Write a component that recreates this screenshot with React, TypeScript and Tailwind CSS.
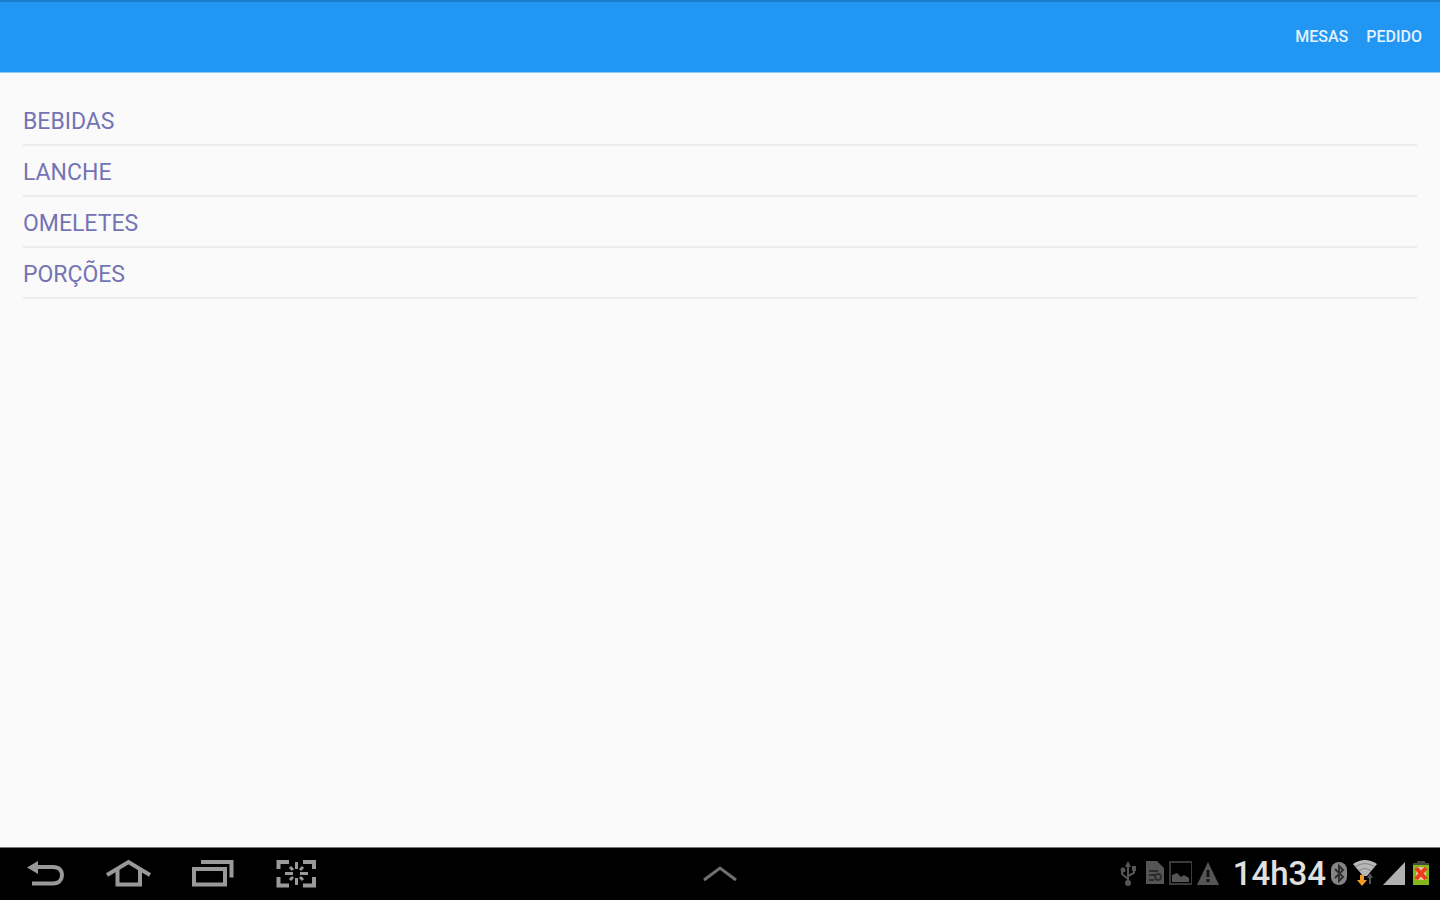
import React from "react";

const categories = ["BEBIDAS", "LANCHE", "OMELETES", "PORÇÕES"];

const BackIcon = () => (
  <svg className="h-8 w-12" viewBox="0 0 48 32" fill="none" stroke="currentColor">
    <path d="M14 9H32C38 9 41 12.5 41 17C41 21.5 38 25.5 32 25.5H11" strokeWidth={4} />
    <path d="M6 9.5L17 3V16Z" fill="currentColor" stroke="none" />
  </svg>
);

const HomeIcon = () => (
  <svg className="h-8 w-12" viewBox="0 0 48 32" fill="none" stroke="currentColor" strokeWidth={4}>
    <path d="M2 17L23.5 4L45 17" />
    <path d="M12.5 12V26.5H35V12" />
  </svg>
);

const RecentsIcon = () => (
  <svg className="h-8 w-12" viewBox="0 0 48 32" fill="none" stroke="currentColor" strokeWidth={4}>
    <path d="M5 11H36V26.5H5Z" />
    <path d="M12 4H42.5V19.5" />
  </svg>
);

const CaptureIcon = () => (
  <svg className="h-8 w-12" viewBox="0 0 48 32" fill="none" stroke="currentColor">
    <path
      d="M5.5 11V4H16M30 4H41V11M41 19V27.5H30M16 27.5H5.5V19"
      strokeWidth={4}
    />
    <path d="M23.5 4V11M23.5 20V27M12 15.5H20M27 15.5H35" strokeWidth={3} />
    <path d="M17 9L20 12M30 9L27 12M17 22L20 19M30 22L27 19" strokeWidth={3} />
  </svg>
);

const UsbIcon = () => (
  <svg className="h-7 w-[22px]" viewBox="0 0 22 28" fill="none" stroke="currentColor" strokeWidth={2}>
    <path d="M8 23V5M8 19L2 14V10M8 16L14 13V9" />
    <path d="M8 1L11 7H5Z" fill="currentColor" stroke="none" />
    <circle cx={8} cy={23} r={3} fill="currentColor" stroke="none" />
    <circle cx={3} cy={10} r={2.5} fill="currentColor" stroke="none" />
    <path d="M12 6H16V11H12Z" fill="currentColor" stroke="none" />
  </svg>
);

const SimIcon = () => (
  <svg className="h-7 w-[18px]" viewBox="0 0 18 28">
    <path d="M0 1H11L18 8V24H0Z" fill="currentColor" />
    <path d="M3 11H12M3 15H9M3 20H8" stroke="#2c2c2c" strokeWidth={2} />
    <circle cx={12} cy={17} r={3} fill="none" stroke="#2c2c2c" strokeWidth={2} />
  </svg>
);

const PictureIcon = () => (
  <svg className="h-7 w-6" viewBox="0 0 24 28">
    <path d="M2 2H24V24H2Z" fill="none" stroke="#3a3a3a" strokeWidth={2} />
    <path d="M4 22V15L9 13L13 17L16 15L21 18V22Z" fill="currentColor" />
  </svg>
);

const WarningIcon = () => (
  <svg className="h-7 w-6" viewBox="0 0 24 28">
    <path d="M12 2L23 25H1Z" fill="currentColor" />
    <path d="M12 10V17M12 19V22" stroke="#151515" strokeWidth={3} />
  </svg>
);

const BluetoothIcon = () => (
  <svg className="h-7 w-4" viewBox="0 0 16 28">
    <rect x={0} y={2} width={16} height={23} rx={8} fill="#858585" />
    <path
      d="M4 9L12 17L8 21V6L12 10L4 18"
      fill="none"
      stroke="#303030"
      strokeWidth={2}
    />
  </svg>
);

const WifiIcon = () => (
  <svg className="h-7 w-[26px]" viewBox="0 0 26 28">
    <path d="M1 4Q13 -4 25 4L15 16H11Z" fill="#b8b8b8" />
    <path d="M3 7Q13 0 23 7M7 11Q13 6 19 11" fill="none" stroke="#858585" strokeWidth={1} />
    <path d="M18 13L21 18H19V24H17V18H15Z" fill="#555" />
    <path d="M8 15H12V20H15L10 26L5 20H8Z" fill="#f39a25" />
  </svg>
);

const SignalIcon = () => (
  <svg className="h-7 w-6" viewBox="0 0 24 28">
    <path d="M22 2V25H0Z" fill="#b0b0b0" />
  </svg>
);

const BatteryIcon = () => (
  <svg className="h-7 w-[18px]" viewBox="0 0 18 28">
    <path d="M5 1H13V3H17V6H1V3H5Z" fill="#45483c" />
    <path d="M1 5H17V25H1Z" fill="#82b819" />
    <path d="M4 7H14V20H4Z" fill="#e8c590" />
    <path d="M4 8L14 19M14 8L4 19" stroke="#ea3c20" strokeWidth={4} />
  </svg>
);

const navButtons = [
  { label: "Voltar", Icon: BackIcon },
  { label: "Início", Icon: HomeIcon },
  { label: "Recentes", Icon: RecentsIcon },
  { label: "Capturar tela", Icon: CaptureIcon },
];

const App = () => {
  return (
    <div className="flex min-h-screen flex-col bg-[#fafafa] font-[Roboto,sans-serif]">
      <header className="flex h-[73px] items-center justify-end gap-[18px] border-t-2 border-b border-t-[#1c7dcb] border-b-[#8fc9f9] bg-[#2196f3] px-[18px] text-base font-medium text-[#e4f2fe]">
        <button>MESAS</button>
        <button>PEDIDO</button>
      </header>

      <main className="grow px-[23px] pt-[22px]">
        <ul>
          {categories.map((category) => (
            <li key={category} className="border-b-2 border-[#ececec]">
              <button className="flex h-[49px] w-full items-center pt-[5px] text-left text-[23px] text-[#7474b4]">
                {category}
              </button>
            </li>
          ))}
        </ul>
      </main>

      <footer className="grid h-[53px] grid-cols-[1fr_auto_1fr] items-center border-t border-[#777] bg-black">
        <nav className="flex pl-[3px] text-[#999]">
          {navButtons.map(({ label, Icon }) => (
            <button key={label} aria-label={label} className="flex w-[84px] justify-center">
              <Icon />
            </button>
          ))}
        </nav>

        <button aria-label="Abrir bandeja" className="text-[#707070]">
          <svg className="h-5 w-9" viewBox="0 0 36 20" fill="none" stroke="currentColor" strokeWidth={3}>
            <path d="M2 16L18 4L34 16" />
          </svg>
        </button>

        <div className="flex items-center justify-end gap-[5px] pr-[10px]">
          <div className="flex items-center gap-1 pr-2 text-[#555]">
            <UsbIcon />
            <SimIcon />
            <PictureIcon />
            <WarningIcon />
          </div>
          <time className="text-[33px] leading-9 font-medium text-[#e0e0e0]">14h34</time>
          <BluetoothIcon />
          <WifiIcon />
          <SignalIcon />
          <BatteryIcon />
        </div>
      </footer>
    </div>
  );
};

export default App;
